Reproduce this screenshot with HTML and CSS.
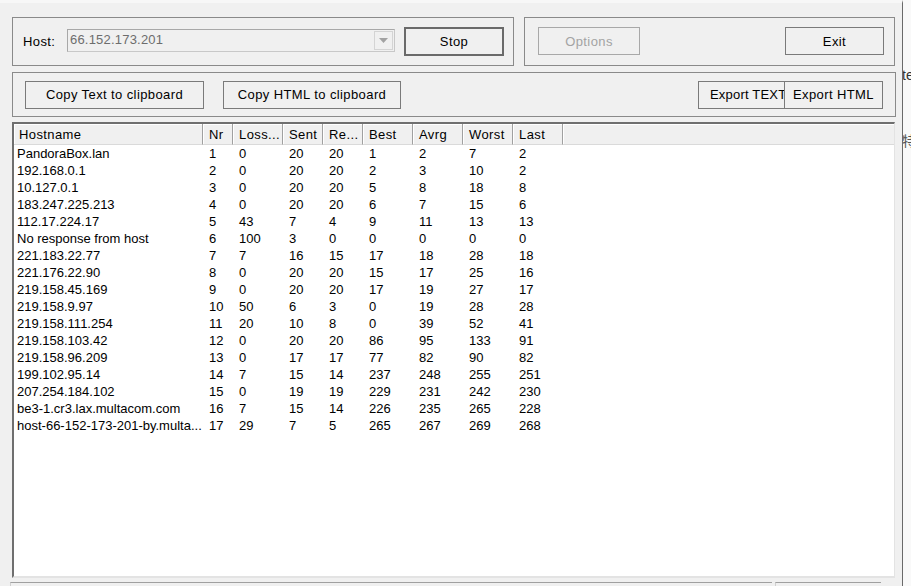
FILE: index.html
```html
<!DOCTYPE html>
<html>
<head>
<meta charset="utf-8">
<link rel="stylesheet" href="styles.css">
</head>
<body>
<div class="screen">
  <div class="window">
    <div class="top-row">
      <div class="group g-host">
        <span class="label">Host:</span>
        <div class="combo">
          <span class="combo-text">66.152.173.201</span>
          <span class="combo-btn"><svg width="9" height="5" viewBox="0 0 9 5"><path d="M0 0H9L4.5 5Z" fill="#a2a2a2"/></svg></span>
        </div>
        <button class="btn btn-stop">Stop</button>
      </div>
      <div class="group g-opts">
        <button class="btn btn-options">Options</button>
        <button class="btn btn-exit">Exit</button>
      </div>
    </div>
    <div class="group g-export">
      <button class="btn btn-copytext">Copy Text to clipboard</button>
      <button class="btn btn-copyhtml">Copy HTML to clipboard</button>
      <div class="spacer"></div>
      <button class="btn btn-exptext">Export TEXT</button>
      <button class="btn btn-exphtml">Export HTML</button>
    </div>
    <div class="list">
      <div class="lrow head">
        <div class="c c0">Hostname</div><div class="c">Nr</div><div class="c">Loss...</div><div class="c">Sent</div><div class="c">Re...</div><div class="c">Best</div><div class="c">Avrg</div><div class="c">Worst</div><div class="c">Last</div><div class="c fill"></div>
      </div>
      <div id="rows"></div>
    </div>
    <div class="status">
      <div class="panel p1"></div>
      <div class="panel p2"></div>
    </div>
  </div>
  <div class="behind">
    <span class="b1">te</span>
    <span class="b2">特</span>
  </div>
</div>
<script src="app.js"></script>
</body>
</html>
```
FILE: app.js
```js
const data = [
  ["PandoraBox.lan",1,0,20,20,1,2,7,2],
  ["192.168.0.1",2,0,20,20,2,3,10,2],
  ["10.127.0.1",3,0,20,20,5,8,18,8],
  ["183.247.225.213",4,0,20,20,6,7,15,6],
  ["112.17.224.17",5,43,7,4,9,11,13,13],
  ["No response from host",6,100,3,0,0,0,0,0],
  ["221.183.22.77",7,7,16,15,17,18,28,18],
  ["221.176.22.90",8,0,20,20,15,17,25,16],
  ["219.158.45.169",9,0,20,20,17,19,27,17],
  ["219.158.9.97",10,50,6,3,0,19,28,28],
  ["219.158.111.254",11,20,10,8,0,39,52,41],
  ["219.158.103.42",12,0,20,20,86,95,133,91],
  ["219.158.96.209",13,0,17,17,77,82,90,82],
  ["199.102.95.14",14,7,15,14,237,248,255,251],
  ["207.254.184.102",15,0,19,19,229,231,242,230],
  ["be3-1.cr3.lax.multacom.com",16,7,15,14,226,235,265,228],
  ["host-66-152-173-201-by.multa...",17,29,7,5,265,267,269,268]
];
const rows = document.getElementById("rows");
for (const r of data) {
  const row = document.createElement("div");
  row.className = "lrow";
  r.forEach((v, i) => {
    const c = document.createElement("div");
    c.className = i === 0 ? "c c0" : "c";
    c.textContent = v;
    row.appendChild(c);
  });
  rows.appendChild(row);
}
```
FILE: styles.css
```css
html, body {
  margin: 0;
  padding: 0;
  background: #f0f0f0;
}
body {
  font-family: "Liberation Sans", Arial, sans-serif;
  font-size: 13px;
  letter-spacing: 0.4px;
  color: #000;
  overflow: hidden;
}
.screen {
  display: flex;
  width: 911px;
  height: 586px;
  overflow: hidden;
}
.window {
  width: 903px;
  flex: none;
  background: #f0f0f0;
  border-right: 1px solid #6a6a6a;
  border-top: 3px solid #f7f7f7;
  box-sizing: border-box;
  padding-left: 12px;
  padding-top: 14px;
}
.behind {
  flex: 1;
  background: #f9f9f9;
  overflow: hidden;
  display: flex;
  flex-direction: column;
  color: #333;
  font-size: 14px;
  letter-spacing: 0;
}
.b1 { margin-top: 67px; margin-left: -1px; line-height: 16px; }
.b2 { margin-top: 49px; margin-left: -1px; line-height: 16px; font-family: "Noto Sans CJK SC", sans-serif; color: #555; }

.top-row {
  display: flex;
  gap: 10px;
}
.group {
  border: 1px solid #8a8a8a;
  box-sizing: border-box;
  display: flex;
  align-items: center;
}
.g-host {
  width: 502px;
  height: 49px;
  padding-left: 10px;
}
.g-opts {
  width: 371px;
  height: 49px;
  padding-left: 13px;
  padding-right: 10px;
  justify-content: space-between;
}
.label {
  width: 44px;
  line-height: 16px;
  margin-top: 1px;
}
.combo {
  width: 328px;
  height: 23px;
  box-sizing: border-box;
  border: 1px solid #c8c8c8;
  border-top-color: #a8a8a8;
  border-left-color: #a8a8a8;
  display: flex;
  align-items: center;
  justify-content: space-between;
  margin-top: -3px;
}
.combo-text {
  color: #6d6d6d;
  padding-left: 2px;
  line-height: 16px;
  letter-spacing: 0.2px;
}
.combo-btn {
  width: 19px;
  height: 19px;
  box-sizing: border-box;
  border: 1px solid #d4d4d4;
  margin-right: 1px;
  display: flex;
  align-items: center;
  justify-content: center;
}
.btn {
  font-family: "Liberation Sans", Arial, sans-serif;
  font-size: 13px;
  letter-spacing: 0.4px;
  color: #000;
  background: #f0f0f0;
  border: 1px solid #7a7a7a;
  height: 28px;
  padding: 0;
  margin: 0;
  box-sizing: border-box;
  white-space: nowrap;
  overflow: hidden;
}
.btn-stop {
  width: 100px;
  height: 29px;
  margin-left: 9px;
  margin-top: -1px;
  border: 2px solid #6a6a6a;
}
.btn-options {
  width: 102px;
  color: #a3a3a3;
  border-color: #a8a8a8;
  margin-top: -1px;
}
.btn-exit { width: 99px; margin-top: -1px; }

.g-export {
  margin-top: 6px;
  width: 884px;
  height: 45px;
  padding-left: 12px;
  padding-right: 12px;
}
.btn-copytext { width: 179px; }
.btn-copyhtml { width: 178px; margin-left: 19px; }
.spacer { flex: 1; }
.btn-exptext {
  width: 87px;
  text-align: left;
  padding-left: 11px;
  letter-spacing: 0.2px;
}
.btn-exphtml {
  width: 99px;
  margin-left: -1px;
}

.list {
  margin-top: 5px;
  width: 883px;
  height: 456px;
  box-sizing: border-box;
  background: #fff;
  border-top: 2px solid #6f6f6f;
  border-left: 2px solid #6f6f6f;
  border-right: 1px solid #e3e3e3;
  border-bottom: 2px solid #e3e3e3;
  overflow: hidden;
}
.lrow {
  display: grid;
  grid-template-columns: 189px 30px 50px 40px 40px 50px 50px 50px 50px 1fr;
  height: 17px;
  line-height: 17px;
  letter-spacing: 0;
}
.lrow .c {
  padding-left: 6px;
  white-space: nowrap;
  overflow: hidden;
}
.lrow .c0 { padding-left: 3px; }
.lrow.head {
  height: 21px;
  line-height: 22px;
  background: #f0f0f0;
  letter-spacing: 0.4px;
}
.lrow.head .c {
  border-right: 1px solid #a0a0a0;
  border-bottom: 1px solid #dadada;
  box-shadow: inset 1px 1px 0 #ffffff;
  box-sizing: border-box;
}
.lrow.head .c0 { padding-left: 5px; }
.lrow.head .fill { border-right: none; }

.status {
  margin-top: 4px;
  margin-left: -2px;
  display: flex;
  gap: 3px;
}
.panel {
  height: 10px;
  border-top: 1px solid #a0a0a0;
  border-left: 1px solid #d0d0d0;
}
.p1 { width: 761px; }
.p2 { width: 105px; }
```
